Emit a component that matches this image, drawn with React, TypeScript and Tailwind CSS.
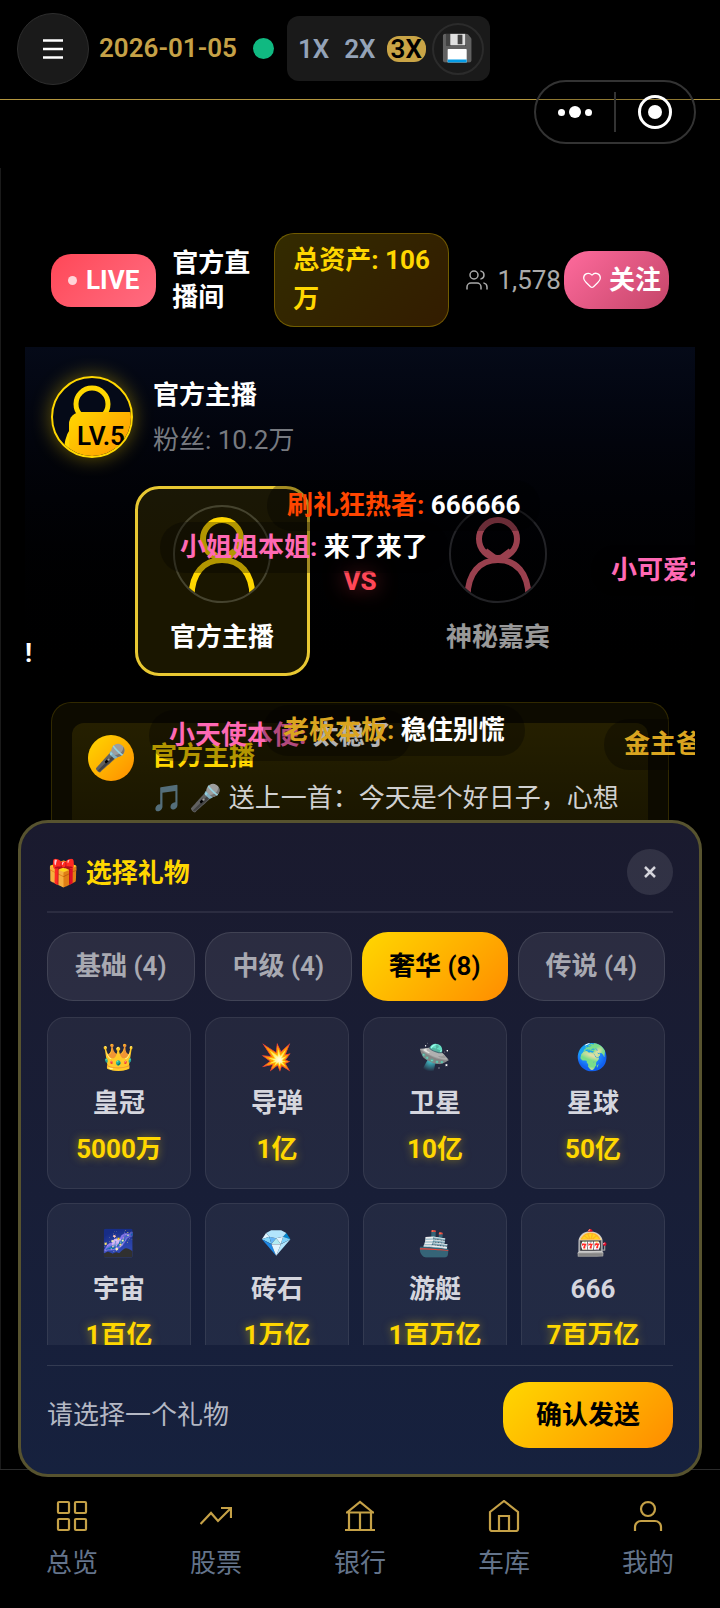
// Live room page
// Top bar, live stage with floating comments, gift picker and bottom navigation

import { Heart, Users } from "lucide-react"

const speeds = ["1X", "2X", "3X"]

const tabs = [
  { name: "基础", count: 4 },
  { name: "中级", count: 4 },
  { name: "奢华", count: 8 },
  { name: "传说", count: 4 },
]

const gifts = [
  { icon: "👑", name: "皇冠", price: "5000万" },
  { icon: "💥", name: "导弹", price: "1亿" },
  { icon: "🛸", name: "卫星", price: "10亿" },
  { icon: "🌍", name: "星球", price: "50亿" },
  { icon: "🌌", name: "宇宙", price: "1百亿" },
  { icon: "💎", name: "砖石", price: "1万亿" },
  { icon: "🚢", name: "游艇", price: "1百万亿" },
  { icon: "🎰", name: "666", price: "7百万亿" },
]

// Floating comments, positioned over the live room
const comments = [
  { user: "刷礼狂热者:", text: "666666", color: "text-[#ff4500]", place: "left-[242px] top-[267px]" },
  { user: "小姐姐本姐:", text: "来了来了", color: "text-[#ff69b4]", place: "left-[135px] top-[309px]" },
  { user: "小可爱本爱:", text: "太稳了", color: "text-[#ff69b4]", place: "left-[566px] top-[332px]" },
  { user: "小天使本使:", text: "太稳了", color: "text-[#ff69b4]", place: "left-[124px] top-[497px]" },
  { user: "老板本板:", text: "稳住别慌", color: "text-[#daa520]", place: "left-[238px] top-[492px]" },
  { user: "金主爸爸:", text: "稳住别慌", color: "text-[#daa520]", place: "left-[579px] top-[506px]" },
]

function Person({ className }: { className: string }) {
  return (
    <svg viewBox="0 0 94 94" className={className} fill="none" stroke="currentColor" strokeWidth="6" aria-hidden="true">
      <circle cx="47" cy="32" r="19" />
      <path d="M35 43l12 9 12-9" strokeWidth="4" />
      <path d="M16.500 90C16.500 66 29 53 47 53s30.500 13 30.500 37" />
    </svg>
  )
}

function Header() {
  return (
    <header className="flex h-[100px] items-center border-b border-[#b3963f] px-[17px] pb-[2px]">
      <button
        aria-label="菜单"
        className="flex size-[72px] shrink-0 items-center justify-center rounded-full border border-[#2e2e2e] bg-[#1a1a1a] text-white"
      >
        <svg viewBox="0 0 20 20" className="size-5" stroke="currentColor" strokeWidth="2.500" aria-hidden="true">
          <path d="M0 1.500h20M0 10h20M0 18.500h20" />
        </svg>
      </button>
      <time className="ml-[10px] font-semibold text-[#c5a147]">2026-01-05</time>
      <span className="ml-4 size-[21px] shrink-0 rounded-full bg-[#10b981]" />
      <div className="ml-[13px] flex h-[65px] items-center rounded-xl bg-[#1a1a1a] pr-[6px] pl-[7px]">
        <div className="flex gap-[7px]">
          {speeds.map((speed) => (
            <button
              key={speed}
              className={
                speed === "3X"
                  ? "rounded-xl bg-[#c9a446] px-1 leading-[26px] font-semibold text-black"
                  : "px-1 leading-[26px] font-semibold text-[#94a3b8]"
              }
            >
              {speed}
            </button>
          ))}
        </div>
        <button
          aria-label="保存"
          className="ml-[6px] flex size-[52px] items-center justify-center rounded-full border-2 border-[#2b2b2b]"
        >
          💾
        </button>
      </div>
    </header>
  )
}

// Rounded pill with the "more" and "close" actions
function Capsule() {
  return (
    <div className="absolute top-[80px] right-6 z-10 flex h-16 w-[162px] items-center rounded-full border-2 border-[#333] bg-black/20 text-white">
      <button aria-label="更多" className="flex flex-1 items-center justify-center gap-1">
        <span className="size-[7px] rounded-full bg-white" />
        <span className="size-3 rounded-full bg-white" />
        <span className="size-[7px] rounded-full bg-white" />
      </button>
      <span className="h-10 w-[2px] bg-[#333]" />
      <button aria-label="关闭小程序" className="flex flex-1 items-center justify-center">
        <span className="flex size-[34px] items-center justify-center rounded-full border-[3px] border-white">
          <span className="size-[14px] rounded-full bg-white" />
        </span>
      </button>
    </div>
  )
}

function RoomBar() {
  return (
    <div className="flex items-center px-[26px] py-5">
      <div className="flex h-[53px] shrink-0 items-center gap-[9px] rounded-[20px] bg-linear-135 from-[#ff4757] to-[#ff6b81] px-[17px] font-bold text-white">
        <span className="size-[9px] rounded-full bg-white/75" />
        LIVE
      </div>
      <h1 className="ml-4 w-[86px] shrink-0 leading-[34px] font-bold text-white">官方直播间</h1>
      <div className="ml-4 flex-1 rounded-[20px] border border-[#ffd700]/30 bg-linear-135 from-[#ffd700]/20 to-[#ff8c00]/20 py-[7px] pr-2 pl-[18px] leading-[39px] font-bold text-[#ffd700]">
        总资产: 106万
      </div>
      <div className="ml-4 flex shrink-0 items-center gap-2 text-[#aaa]">
        <Users className="size-6" strokeWidth={1.5} />
        1,578
      </div>
      <button className="ml-[3px] flex h-[58px] shrink-0 items-center gap-[7px] rounded-[25px] bg-linear-135 from-[#ff6b9d] to-[#c44569] pr-[8px] pl-[18px] font-bold text-white">
        <Heart className="size-5" strokeWidth={1.5} />
        关注
      </button>
    </div>
  )
}

function Host() {
  return (
    <div className="flex items-center">
      <div className="rounded-full shadow-[0_0_20px_rgba(255,215,0,0.4)]">
        <div className="relative size-[82px] overflow-hidden rounded-full border-2 border-[#ffd700] bg-[#050a18] text-[#ffd700]">
          <svg viewBox="0 0 78 78" className="size-full" fill="none" stroke="currentColor" strokeWidth="5" aria-hidden="true">
            <circle cx="39" cy="26" r="16" />
            <path d="M13 78c0-22 9-36 26-36s26 14 26 36" />
          </svg>
          <span className="absolute top-[34px] left-4 h-12 rounded-xl bg-linear-135 from-[#ffd700] to-[#ff8c00] pr-4 pl-2 leading-[48px] font-semibold text-black">
            LV.5
          </span>
        </div>
      </div>
      <div className="ml-5 pt-[2px]">
        <h2 className="leading-[45px] font-bold text-white">官方主播</h2>
        <p className="leading-[45px] text-[#777a80]">粉丝: 10.2万</p>
      </div>
    </div>
  )
}

function Versus() {
  return (
    <div className="mt-[23px] flex items-center justify-center">
      <div className="flex h-[190px] w-[175px] flex-col items-center rounded-3xl border-[3px] border-[#e8c832] bg-[#ffd700]/10 pt-4">
        <div className="size-[98px] overflow-hidden rounded-full border-2 border-[#45432e] text-[#ffd700]">
          <Person className="size-full" />
        </div>
        <p className="mt-[13px] leading-[42px] font-bold text-white">官方主播</p>
      </div>
      <span className="w-[101px] text-center font-extrabold text-[#ff4757] text-shadow-[0_0_20px_rgba(255,71,87,0.5)]">VS</span>
      <div className="flex h-[190px] w-[175px] flex-col items-center rounded-3xl border-[3px] border-transparent pt-4 opacity-60">
        <div className="size-[98px] overflow-hidden rounded-full border-2 border-[#3a3a3f] text-[#ff6b81]">
          <Person className="size-full" />
        </div>
        <p className="mt-[13px] leading-[42px] font-bold text-white">神秘嘉宾</p>
      </div>
    </div>
  )
}

function Song() {
  return (
    <div className="mt-[26px] rounded-[20px] border border-[#ffd700]/15 bg-[#ffd700]/5 p-5">
      <div className="flex rounded-xl bg-linear-to-b from-[#ffd700]/10 to-[#ffd700]/5 px-4 py-3">
        <span className="flex size-[46px] shrink-0 items-center justify-center rounded-full bg-linear-135 from-[#ffd700] to-[#ff8c00]">
          🎤
        </span>
        <div className="ml-[17px] leading-[42px]">
          <h3 className="font-bold text-[#ffd700]">官方主播</h3>
          <p className="whitespace-nowrap text-[#d0d0d0]">🎵 🎤 送上一首：今天是个好日子，心想</p>
        </div>
      </div>
    </div>
  )
}

function Comments() {
  return (
    <div className="pointer-events-none absolute inset-0 overflow-hidden font-bold">
      {comments.map((comment) => (
        <p
          key={comment.user}
          className={`absolute rounded-[25px] bg-black/30 px-5 leading-[51px] whitespace-nowrap text-white ${comment.place}`}
        >
          <span className={comment.color}>{comment.user}</span> {comment.text}
        </p>
      ))}
      <p className="absolute top-[415px] left-0 leading-[51px] text-white">!</p>
    </div>
  )
}

function GiftPanel() {
  return (
    <section className="absolute right-[18px] -bottom-2 left-[17px] z-20 rounded-[30px] border-[3px] border-[#57532f] bg-linear-to-b from-[#1a1a2e] to-[#16213e] px-[26px] pt-[26px] pb-[26px]">
      <div className="flex h-[64px] items-start justify-between border-b-2 border-white/8">
        <h2 className="leading-[48px] font-bold text-[#ffd700]">🎁 选择礼物</h2>
        <button
          aria-label="关闭"
          className="flex size-[46px] items-center justify-center rounded-full bg-white/10 text-[#d5d5dc]"
        >
          <svg viewBox="0 0 12 12" className="size-3" stroke="currentColor" strokeWidth="2.500" aria-hidden="true">
            <path d="M1 1l10 10M11 1L1 11" />
          </svg>
        </button>
      </div>

      <div className="mt-[19px] flex gap-[10px] pr-2">
        {tabs.map((tab) => (
          <button
            key={tab.name}
            className={
              tab.name === "奢华"
                ? "h-[69px] flex-1 rounded-[26px] bg-linear-135 from-[#ffd700] to-[#ff8c00] font-semibold whitespace-nowrap text-black"
                : "h-[69px] flex-1 rounded-[26px] border border-white/10 bg-white/8 font-semibold whitespace-nowrap text-white/60"
            }
          >
            {tab.name} ({tab.count})
          </button>
        ))}
      </div>

      {/* Gift list scrolls inside the panel */}
      <div className="mt-4 grid max-h-[328px] grid-cols-4 gap-[14px] overflow-y-auto pr-2 [scrollbar-width:none]">
        {gifts.map((gift) => (
          <button
            key={gift.name}
            className="flex h-[172px] flex-col items-center rounded-[18px] border border-white/8 bg-white/5 pt-4"
          >
            <span className="leading-[46px]">{gift.icon}</span>
            <span className="leading-[46px] font-bold text-[#d5d6de]">{gift.name}</span>
            <span className="leading-[46px] font-bold text-[#ffd700] text-shadow-[0_0_8px_rgba(255,215,0,0.5)]">
              {gift.price}
            </span>
          </button>
        ))}
      </div>

      <div className="mt-5 flex items-center justify-between border-t border-white/12 pt-4">
        <p className="text-[#b4b8c4]">请选择一个礼物</p>
        <button className="h-[66px] rounded-[26px] bg-linear-135 from-[#ffd700] to-[#ff8c00] px-[33px] font-bold text-black">
          确认发送
        </button>
      </div>
    </section>
  )
}

const navItems = [
  { label: "总览", path: "M3 2h9a1 1 0 0 1 1 1v9a1 1 0 0 1-1 1H3a1 1 0 0 1-1-1V3a1 1 0 0 1 1-1zM20 2h9a1 1 0 0 1 1 1v9a1 1 0 0 1-1 1h-9a1 1 0 0 1-1-1V3a1 1 0 0 1 1-1zM3 19h9a1 1 0 0 1 1 1v9a1 1 0 0 1-1 1H3a1 1 0 0 1-1-1v-9a1 1 0 0 1 1-1zM20 19h9a1 1 0 0 1 1 1v9a1 1 0 0 1-1 1h-9a1 1 0 0 1-1-1v-9a1 1 0 0 1 1-1z" },
  { label: "股票", path: "M.5 24L11 13l7 8L31 8M21 8h10v10" },
  { label: "银行", path: "M2 12.500h28M3 12.500L16 2l13 10.500M5 13v17M16 13v17M27 13v17M1 30h30" },
  { label: "车库", path: "M2 12L16 1l14 11v17a2 2 0 0 1-2 2H4a2 2 0 0 1-2-2zM11 31V16h10v15" },
  { label: "我的", path: "M16 2a6.500 6.500 0 0 1 0 14a6.500 6.500 0 0 1 0-14zM3 31v-4a6 6 0 0 1 6-6h14a6 6 0 0 1 6 6v4" },
]

function BottomNav() {
  return (
    <nav className="grid h-[139px] grid-cols-5 border-t border-[#2b2b2b] bg-black pt-[30px]">
      {navItems.map((item) => (
        <a key={item.label} href="#" className="flex flex-col items-center text-[#64748b]">
          <svg viewBox="0 0 32 32" className="size-8 text-[#c5a147]" fill="none" stroke="currentColor" strokeWidth="2.200" aria-hidden="true">
            <path d={item.path} />
          </svg>
          <span className="mt-3 leading-[38px]">{item.label}</span>
        </a>
      ))}
    </nav>
  )
}

export default function App() {
  return (
    <div className="relative flex min-h-screen flex-col bg-black font-[Roboto,'Noto_Sans_CJK_SC','Noto_Color_Emoji',sans-serif] text-[26px] leading-[39px]">
      <Header />
      <Capsule />
      <main className="relative mt-[68px] flex-1 border-l border-[#1a1a1a] pt-[45px] pr-[25px] pl-6">
        <div className="relative overflow-hidden">
          <RoomBar />
          <div className="bg-linear-to-b from-[#050a18] to-black to-70% px-[26px] pt-6 pb-4">
            <Host />
            <Versus />
            <Song />
          </div>
          <Comments />
        </div>
        <GiftPanel />
      </main>
      <BottomNav />
    </div>
  )
}
